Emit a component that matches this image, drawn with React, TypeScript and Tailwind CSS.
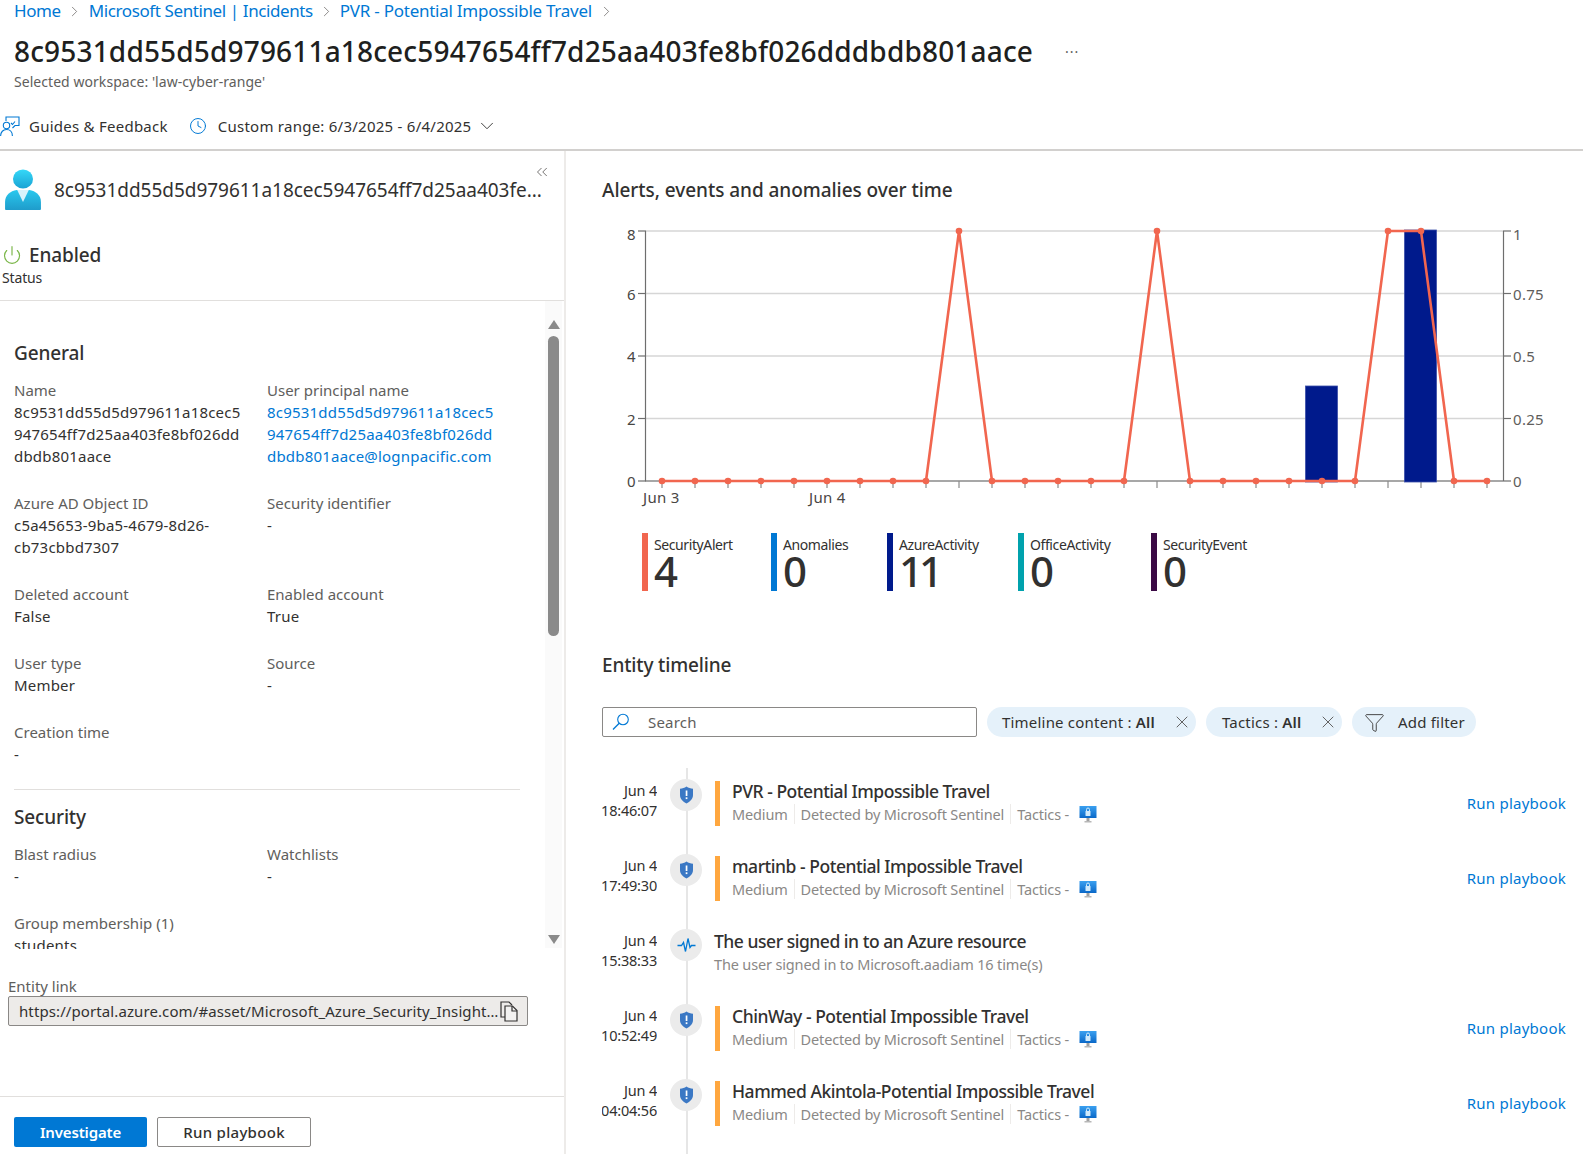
import { ChevronDown, ChevronRight, ChevronsLeft, Clock, Funnel, Power, X } from "lucide-react";

const points = [0, 0, 0, 0, 0, 0, 0, 0, 0, 8, 0, 0, 0, 0, 0, 8, 0, 0, 0, 0, 0, 0, 8, 8, 0, 0];
const px = (i: number) => 37 + i * 33;
const py = (v: number) => 261 - v * 31.25;
// the top labels sit lower than their gridline
const labelY = (v: number) => py(v) + (v === 8 ? 9 : 6);

const UserIcon = () => (
  <svg width="38" height="42" viewBox="0 0 36 42" preserveAspectRatio="none" className="shrink-0">
    <defs>
      <linearGradient id="userHead" x1="0" y1="0" x2="0" y2="1">
        <stop offset="0" stopColor="#35d8f8" />
        <stop offset="1" stopColor="#1aa3d4" />
      </linearGradient>
      <linearGradient id="userBody" x1="0" y1="0" x2="0" y2="1">
        <stop offset="0" stopColor="#28c8ee" />
        <stop offset="1" stopColor="#1f9ccb" />
      </linearGradient>
    </defs>
    <circle cx="18" cy="10" r="9.5" fill="url(#userHead)" />
    <path d="M1 40v-7c0-7 5-11 11-12h12c6 1 11 5 11 12v7c0 1-1 1-1 1H2s-1 0-1-1z" fill="url(#userBody)" />
    <path d="M12.5 21h11L18 33z" fill="#d8f3fb" />
  </svg>
);

const GuidesIcon = () => (
  <svg width="20" height="21" viewBox="0 0 20 21" fill="none" stroke="#0078d4" strokeWidth="1.1" className="shrink-0">
    <path d="M6 5V1h13v8.5h-4l-2.5 2.5" />
    <circle cx="6.5" cy="9.5" r="3.2" />
    <path d="M0.6 20c0-4 2.5-6.5 5.9-6.5s5.900 2.500 5.900 6.500" />
    <path d="M11 7l1.500 1.500L15 5.500" />
  </svg>
);

const SearchIcon = () => (
  <svg width="18" height="18" viewBox="0 0 18 18" fill="none" stroke="#0078d4" strokeWidth="1.1" className="shrink-0">
    <circle cx="11" cy="6.500" r="5.300" />
    <path d="M7.200 10.300L1 16.500" strokeWidth="1.300" />
  </svg>
);

const CopyIcon = () => (
  <svg width="18" height="21" viewBox="0 0 18 21" fill="none" stroke="#323130" strokeWidth="1.200" className="shrink-0">
    <path d="M5 16H1V1h8l3 3" />
    <path d="M5 5h7.500L17 9.500V20H5z" fill="#f3f2f1" />
    <path d="M12 5v5h5" />
  </svg>
);

const ShieldIcon = () => (
  <svg width="15" height="18" viewBox="0 0 15 18">
    <path d="M7.500 0.500c2 1.500 4 2 6.500 2.200v6.300c0 4-3 6.800-6.500 8.500C4 15.800 1 13 1 9V2.700c2.500-.2 4.500-.7 6.500-2.200z" fill="#3b78c4" />
    <rect x="6.700" y="4.500" width="1.700" height="5.500" fill="#fff" />
    <rect x="6.700" y="11.300" width="1.700" height="1.800" fill="#fff" />
  </svg>
);

const PulseIcon = () => (
  <svg width="19" height="16" viewBox="0 0 19 16" fill="none" stroke="#0078d4" strokeWidth="1.300">
    <path d="M0.500 8.500h4l2-3 2 9 2.500-13 2 9 1.500-2h4" />
  </svg>
);

const MonitorIcon = () => (
  <svg width="18" height="18" viewBox="0 0 18 18" className="shrink-0">
    <defs>
      <linearGradient id="screen" x1="0" y1="0" x2="0" y2="1">
        <stop offset="0" stopColor="#3aa0f0" />
        <stop offset="1" stopColor="#0a68c8" />
      </linearGradient>
    </defs>
    <rect x="0.500" y="1" width="17" height="12" fill="url(#screen)" />
    <rect x="7.500" y="13" width="3" height="3" fill="#a0a0a0" />
    <rect x="5.500" y="16" width="7" height="1.500" fill="#b8b8b8" />
    <rect x="6.500" y="6" width="5" height="5" rx="0.500" fill="#cfeafc" />
    <path d="M7.500 6V4.500a1.500 1.500 0 0 1 3 0V6" fill="none" stroke="#cfeafc" strokeWidth="1" />
  </svg>
);

const Field = ({ label, lines, link }: { label: string; lines: string[]; link?: boolean }) => (
  <div>
    <div className="text-[#605e5c] leading-[22px] tracking-[0px]">{label}</div>
    {lines.map((line) => (
      <div key={line} className={`leading-[22px] tracking-[0.2px] ${link ? "text-[#0078d4]" : "text-[#323130]"}`}>
        {line}
      </div>
    ))}
  </div>
);

const Chart = () => (
  <svg width="940" height="290" viewBox="0 0 940 290" className="block tracking-[0.3px]">
    {[0, 2, 4, 6, 8].map((v) => (
      <g key={v}>
        <line x1="21" x2="878" y1={py(v)} y2={py(v)} stroke="#d6d6d6" strokeWidth="1.500" />
        <line x1="13" x2="21" y1={py(v)} y2={py(v)} stroke="#6e6e6e" strokeWidth="1.200" />
        <text x="2" y={labelY(v)} fontSize="15" fill="#484644">{v}</text>
      </g>
    ))}
    <line x1="20.500" x2="20.500" y1={py(8)} y2={py(0)} stroke="#6e6e6e" strokeWidth="1.200" />
    <line x1="878.500" x2="878.500" y1={py(8)} y2={py(0)} stroke="#6e6e6e" strokeWidth="1.200" />
    <line x1="20" x2="878" y1={py(0)} y2={py(0)} stroke="#6e6e6e" strokeWidth="1.200" />
    {[
      ["0", 0],
      ["0.25", 2],
      ["0.5", 4],
      ["0.75", 6],
      ["1", 8],
    ].map(([t, v]) => (
      <g key={t}>
        <line x1="878" x2="886" y1={py(v as number)} y2={py(v as number)} stroke="#6e6e6e" strokeWidth="1.200" />
        <text x="888" y={labelY(v as number)} fontSize="15" fill="#605e5c">{t}</text>
      </g>
    ))}
    {points.map((_, i) => (
      <line key={i} x1={px(i)} x2={px(i)} y1={py(0)} y2={py(0) + 7} stroke="#8a8a8a" strokeWidth="1.200" />
    ))}
    <text x="18" y="283" fontSize="15" fill="#484644">Jun 3</text>
    <text x="184" y="283" fontSize="15" fill="#484644">Jun 4</text>
    <rect x="680.500" y="166" width="32" height="96" fill="#001a8c" stroke="#3b4fa8" strokeWidth="0.800" />
    <rect x="779.500" y="10" width="32" height="252" fill="#001a8c" stroke="#3b4fa8" strokeWidth="0.800" />
    <polyline points={points.map((v, i) => `${px(i)},${py(v)}`).join(" ")} fill="none" stroke="#f1664f" strokeWidth="2.600" strokeLinejoin="round" />
    {points.map((v, i) => (
      <circle key={i} cx={px(i)} cy={py(v)} r="3.300" fill="#f1664f" />
    ))}
  </svg>
);

const legend = [
  { name: "SecurityAlert", value: "4", bar: "bg-[#f1664f]", w: "w-[129px]" },
  { name: "Anomalies", value: "0", bar: "bg-[#0078d4]", w: "w-[116px]" },
  { name: "AzureActivity", value: "11", bar: "bg-[#001a8c]", w: "w-[131px]" },
  { name: "OfficeActivity", value: "0", bar: "bg-[#00a2ad]", w: "w-[133px]" },
  { name: "SecurityEvent", value: "0", bar: "bg-[#3b0a45]", w: "w-[130px]" },
];

const timeline = [
  { date: "18:46:07", title: "PVR - Potential Impossible Travel", alert: true },
  { date: "17:49:30", title: "martinb - Potential Impossible Travel", alert: true },
  { date: "15:38:33", title: "The user signed in to an Azure resource", alert: false },
  { date: "10:52:49", title: "ChinWay - Potential Impossible Travel", alert: true },
  { date: "04:04:56", title: "Hammed Akintola-Potential Impossible Travel", alert: true },
];

export default function App() {
  return (
    <div className="w-[1583px] h-[1154px] overflow-hidden bg-white flex flex-col text-[#323130] text-[15px] font-['Noto_Sans',sans-serif] tracking-[-0.15px]">
      <header className="h-[151px] shrink-0 border-b-2 border-[#d2d0ce] pl-[14px] flex flex-col">
        <nav className="flex items-center h-[22px] text-[17px] text-[#0078d4] tracking-[-0.4px]">
          <span>Home</span>
          <ChevronRight className="w-[17px] h-[17px] ml-[5px] mr-[6px] text-[#605e5c]" strokeWidth={1} />
          <span>Microsoft Sentinel | Incidents</span>
          <ChevronRight className="w-[17px] h-[17px] mx-[5px] text-[#605e5c]" strokeWidth={1} />
          <span className="tracking-[-0.25px]">PVR - Potential Impossible Travel</span>
          <ChevronRight className="w-[17px] h-[17px] mx-[6px] text-[#605e5c]" strokeWidth={1} />
        </nav>
        <div className="flex items-center mt-[9px] h-[40px]">
          <h1 className="text-[28px] leading-[40px] text-[#201f1e] tracking-[0.17px] font-medium">8c9531dd55d5d979611a18cec5947654ff7d25aa403fe8bf026dddbdb801aace</h1>
          <span className="ml-[32px] text-[#605e5c] text-[14px] tracking-[1px]">···</span>
        </div>
        <div className="text-[14px] text-[#605e5c] leading-[20px] mt-[1px] tracking-[0.05px]">Selected workspace: 'law-cyber-range'</div>
        <div className="flex items-center -ml-[14px] mt-[22px] h-[24px] tracking-[0.25px]">
          <GuidesIcon />
          <span className="ml-[9px]">Guides &amp; Feedback</span>
          <Clock className="w-[18px] h-[18px] ml-[21px] text-[#0078d4]" strokeWidth={1.3} />
          <span className="ml-[11px]">Custom range: 6/3/2025 - 6/4/2025</span>
          <ChevronDown className="w-[22px] h-[22px] ml-[5px] text-[#323130]" strokeWidth={1} />
        </div>
      </header>

      <div className="flex flex-1 min-h-0">
        <aside className="w-[566px] shrink-0 border-r-2 border-[#edebe9] flex flex-col relative">
          <ChevronsLeft className="absolute right-[13px] top-[12px] w-[18px] h-[18px] text-[#484644]" strokeWidth={1} />
          <div className="flex items-center pl-[4px] mt-[18px] h-[42px]">
            <UserIcon />
            <span className="ml-[12px] text-[19px] tracking-[-0.03px] text-[#323130]">8c9531dd55d5d979611a18cec5947654ff7d25aa403fe...</span>
          </div>
          <div className="pl-[2px] border-b border-[#e1dfdd] h-[90px] pt-[31px]">
            <div className="flex items-center h-[26px]">
              <Power className="w-[20px] h-[20px] text-[#7ab648]" strokeWidth={1.4} />
              <span className="ml-[7px] text-[19px] font-medium tracking-[-0.1px]">Enabled</span>
            </div>
            <div className="text-[14px] leading-[20px] text-[#323130]">Status</div>
          </div>

          <div className="h-[654px] relative overflow-hidden pl-[14px] pt-[39px]">
            <div className="h-[609px] overflow-hidden">
              <h2 className="text-[19px] leading-[26px] font-medium">General</h2>
              <div className="grid grid-cols-[253px_253px] mt-[13px] gap-y-[25px]">
                <Field label="Name" lines={["8c9531dd55d5d979611a18cec5", "947654ff7d25aa403fe8bf026dd", "dbdb801aace"]} />
                <Field label="User principal name" lines={["8c9531dd55d5d979611a18cec5", "947654ff7d25aa403fe8bf026dd", "dbdb801aace@lognpacific.com"]} link />
                <Field label="Azure AD Object ID" lines={["c5a45653-9ba5-4679-8d26-", "cb73cbbd7307"]} />
                <Field label="Security identifier" lines={["-"]} />
                <Field label="Deleted account" lines={["False"]} />
                <Field label="Enabled account" lines={["True"]} />
                <Field label="User type" lines={["Member"]} />
                <Field label="Source" lines={["-"]} />
                <Field label="Creation time" lines={["-"]} />
              </div>
              <div className="w-[506px] border-t border-[#e1dfdd] mt-[24px]" />
              <h2 className="text-[19px] leading-[26px] font-medium mt-[14px]">Security</h2>
              <div className="grid grid-cols-[253px_253px] mt-[13px] gap-y-[25px]">
                <Field label="Blast radius" lines={["-"]} />
                <Field label="Watchlists" lines={["-"]} />
                <Field label="Group membership (1)" lines={["students"]} />
              </div>
            </div>
            <div className="absolute right-[2px] top-0 bottom-[7px] w-[17px] bg-[#fafafa] flex flex-col items-center">
              <div className="mt-[19px] border-x-[6px] border-x-transparent border-b-[9px] border-b-[#8a8a8a]" />
              <div className="mt-[7px] w-[11px] h-[300px] rounded-full bg-[#8a8a8a]" />
              <div className="mt-auto mb-[4px] border-x-[6px] border-x-transparent border-t-[9px] border-t-[#8a8a8a]" />
            </div>
          </div>

          <div className="pl-[8px] pt-[20px] h-[141px]">
            <div className="text-[#605e5c] leading-[22px] tracking-[0px]">Entity link</div>
            <div className="w-[520px] h-[30px] -mt-[1px] flex items-center bg-[#edebe9] border border-[#8a8886] rounded-[2px] pl-[10px] pr-[9px] tracking-[0.1px]">
              <span className="flex-1 truncate text-[#323130]">https://portal.azure.com/#asset/Microsoft_Azure_Security_Insights/Entity</span>
              <CopyIcon />
            </div>
          </div>

          <div className="border-t border-[#e1dfdd] pl-[14px] pt-[20px] flex gap-[10px]">
            <button className="w-[133px] h-[30px] rounded-[2px] bg-[#0078d4] text-white font-semibold">Investigate</button>
            <button className="w-[154px] h-[30px] rounded-[2px] border border-[#8a8886] text-[#323130] font-medium tracking-[0.3px]">Run playbook</button>
          </div>
        </aside>

        <main className="flex-1 min-w-0 pl-[36px] flex flex-col">
          <h2 className="text-[19px] leading-[26px] font-medium mt-[26px] text-[#323130] tracking-[-0.05px]">Alerts, events and anomalies over time</h2>
          <div className="ml-[23px] mt-[17px]">
            <Chart />
          </div>
          <div className="flex ml-[40px] mt-[23px] h-[58px]">
            {legend.map((item) => (
              <div key={item.name} className={`flex ${item.w}`}>
                <div className={`w-[6px] h-[58px] ${item.bar}`} />
                <div className="ml-[6px]">
                  <div className="text-[14px] leading-[18px] tracking-[-0.4px] mt-[3px]">{item.name}</div>
                  <div className="text-[42px] leading-[38px] -mt-[2px] font-medium tracking-[-4px]">{item.value}</div>
                </div>
              </div>
            ))}
          </div>
          <h2 className="text-[19px] leading-[26px] font-medium mt-[61px]">Entity timeline</h2>
          <div className="flex items-center mt-[29px] h-[30px] tracking-[0.2px]">
            <div className="w-[375px] h-[30px] border border-[#8a8886] rounded-[2px] flex items-center pl-[9px]">
              <SearchIcon />
              <span className="ml-[18px] text-[#605e5c]">Search</span>
            </div>
            <div className="ml-[10px] w-[209px] h-[30px] rounded-full bg-[#e5f1fa] flex items-center pl-[15px]">
              <span>Timeline content : <b className="font-semibold">All</b></span>
              <X className="w-[20px] h-[20px] ml-auto mr-[4px] text-[#484644]" strokeWidth={1} />
            </div>
            <div className="ml-[10px] w-[136px] h-[30px] rounded-full bg-[#e5f1fa] flex items-center pl-[16px]">
              <span>Tactics : <b className="font-semibold">All</b></span>
              <X className="w-[20px] h-[20px] ml-auto mr-[4px] text-[#484644]" strokeWidth={1} />
            </div>
            <div className="ml-[10px] w-[124px] h-[30px] rounded-full bg-[#e5f1fa] flex items-center pl-[12px]">
              <Funnel className="w-[21px] h-[21px] text-[#323130]" strokeWidth={1} />
              <span className="ml-[13px]">Add filter</span>
            </div>
          </div>

          <div className="relative mt-[31px] pt-[13px]">
            <div className="absolute left-[84px] top-0 bottom-[-40px] w-[2px] bg-[#e6e6e6]" />
            {timeline.map((row) => (
              <div key={row.date} className="flex h-[75px] relative">
                <div className="w-[55px] flex flex-col items-end text-[14.5px] leading-[20px] text-[#323130] -mt-[1px] overflow-hidden tracking-[-0.2px]">
                  <div>Jun 4</div>
                  <div className="whitespace-nowrap shrink-0">{row.date}</div>
                </div>
                <div className="ml-[13px] mt-[-2px] w-[32px] h-[32px] rounded-full bg-[#ebebeb] flex items-center justify-center relative">
                  {row.alert ? <ShieldIcon /> : <PulseIcon />}
                </div>
                {row.alert ? (
                  <div className="ml-[13px] flex flex-1">
                    <div className="w-[5px] h-[45px] bg-[#ffa73f]" />
                    <div className="ml-[12px] -mt-[2px]">
                      <div className="text-[17.5px] leading-[25px] font-medium tracking-[-0.47px] text-[#323130]">{row.title}</div>
                      <div className="flex items-center text-[14.5px] leading-[20px] text-[#8a8886] tracking-[-0.15px]">
                        <span className="pr-[6px] border-r border-[#edebe9]">Medium</span>
                        <span className="px-[6px] border-r border-[#edebe9]">Detected by Microsoft Sentinel</span>
                        <span className="pl-[6px]">Tactics -</span>
                        <span className="ml-[10px]"><MonitorIcon /></span>
                      </div>
                    </div>
                    <a className="ml-auto mr-[17px] mt-[11px] text-[#0078d4] leading-[22px] tracking-[0.25px]">Run playbook</a>
                  </div>
                ) : (
                  <div className="ml-[13px] -mt-[2px] -translate-x-[1px]">
                    <div className="text-[17.5px] leading-[25px] font-medium tracking-[-0.47px] text-[#323130]">{row.title}</div>
                    <div className="text-[14.5px] leading-[20px] text-[#8a8886] tracking-[-0.15px]">The user signed in to Microsoft.aadiam 16 time(s)</div>
                  </div>
                )}
              </div>
            ))}
          </div>
        </main>
      </div>
    </div>
  );
}
